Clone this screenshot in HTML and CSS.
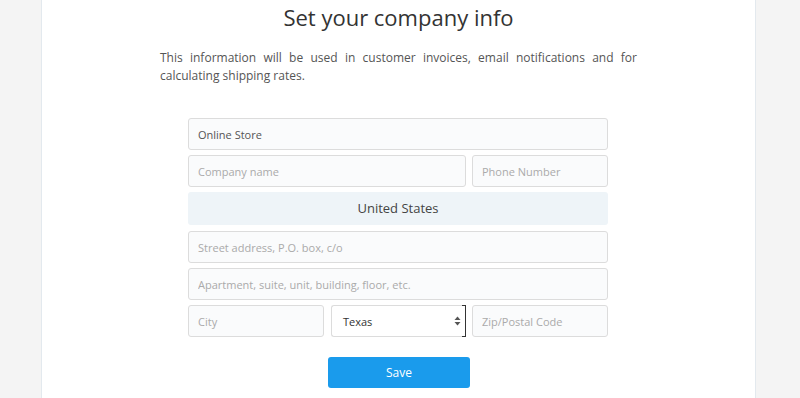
FILE: index.html
```html
<!DOCTYPE html>
<html lang="en">
<head>
    <meta charset="UTF-8">
    <meta name="viewport" content="width=device-width, initial-scale=1.0">
    <title>Set your company info</title>
    <link rel="stylesheet" href="styles.css">
</head>
<body>
    <div class="panel">
        <h1 class="title">Set your company info</h1>
        <p class="intro">This information will be used in customer invoices, email notifications and for calculating shipping rates.</p>

        <form class="company-form">
            <input class="field span-3 filled" type="text" value="Online Store">
            <input class="field span-2" type="text" placeholder="Company name">
            <input class="field" type="text" placeholder="Phone Number">
            <div class="country span-3">United States</div>
            <input class="field span-3" type="text" placeholder="Street address, P.O. box, c/o">
            <input class="field span-3" type="text" placeholder="Apartment, suite, unit, building, floor, etc.">
            <input class="field" type="text" placeholder="City">
            <div class="state">
                <span>Texas</span>
                <svg class="spinner" width="7" height="10" viewBox="0 0 7 10">
                    <path d="M3.5 0.5 L6.5 4 L0.5 4 Z" fill="#555"/>
                    <path d="M3.5 9.5 L6.5 6 L0.5 6 Z" fill="#555"/>
                </svg>
            </div>
            <input class="field" type="text" placeholder="Zip/Postal Code">

            <div class="actions span-3">
                <button class="save" type="button">Save</button>
            </div>
        </form>
    </div>
</body>
</html>
```

FILE: styles.css
```css
body {
    margin: 0;
    background: #f4f4f4;
    font-family: "Open Sans", Arial, sans-serif;
    color: #555;
}
.panel {
    box-sizing: border-box;
    width: 715px;
    height: 398px;
    margin-left: 41px;
    background: #fff;
    border-left: 1px solid #e3e9ee;
    border-right: 1px solid #e3e9ee;
}
.title {
    margin: 0;
    font-size: 22px;
    font-weight: 400;
    line-height: 34px;
    color: #333;
    text-align: center;
}
.intro {
    width: 477px;
    margin: 15px 0 0 118px;
    font-size: 12px;
    line-height: 18px;
    text-align: justify;
}
.company-form {
    display: grid;
    grid-template-columns: repeat(3, 136px);
    column-gap: 6px;
    row-gap: 5px;
    width: 420px;
    margin: 33px 0 0 146px;
}
.span-2 { grid-column: span 2; }
.span-3 { grid-column: span 3; }
.field {
    box-sizing: border-box;
    height: 32px;
    padding: 0 9px;
    border: 1px solid #dcdcdc;
    border-radius: 3px;
    background: #fafbfc;
    font-family: inherit;
    font-size: 11px;
    color: #555;
    outline: none;
}
.field::placeholder {
    color: #aaa;
}
.country {
    height: 33px;
    margin-bottom: 1px;
    border-radius: 3px;
    background: #eef4f8;
    font-size: 13px;
    line-height: 33px;
    color: #444;
    text-align: center;
}
.state {
    position: relative;
    box-sizing: border-box;
    height: 32px;
    display: flex;
    align-items: center;
    justify-content: space-between;
    padding: 0 5px 0 11px;
    margin-left: 1px;
    border: 1px solid #dcdcdc;
    border-right: none;
    border-radius: 3px 0 0 3px;
    background: #fff;
    font-size: 11px;
    color: #333;
}
/* dark bracket of the native select on its right edge */
.state::after {
    content: "";
    position: absolute;
    top: -1px;
    right: 0;
    bottom: -1px;
    width: 3px;
    border: 1px solid #333;
    border-left: none;
}
.actions {
    display: flex;
    justify-content: center;
    margin-top: 15px;
    padding-left: 2px;
}
.save {
    width: 142px;
    height: 31px;
    border: none;
    border-radius: 3px;
    background: #1a9bec;
    color: #fff;
    font-family: inherit;
    font-size: 12px;
    cursor: pointer;
}
```
